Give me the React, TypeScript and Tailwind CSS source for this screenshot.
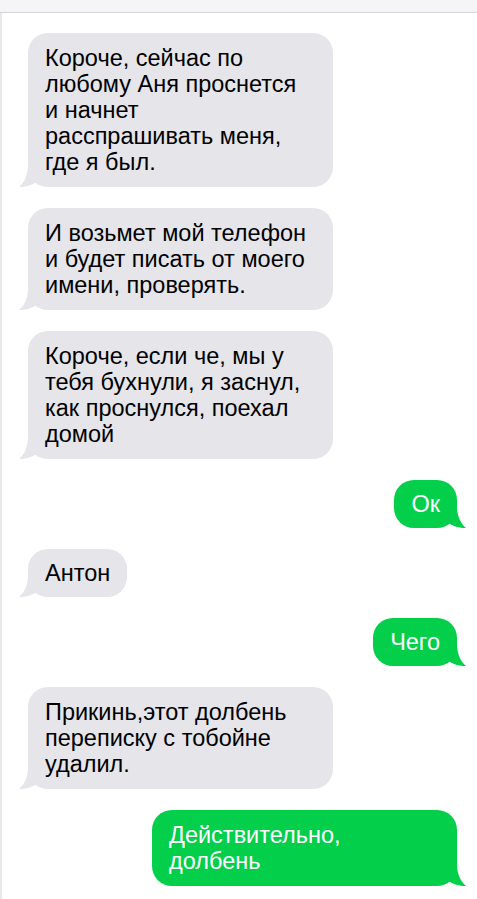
import React from 'react';

type Message = {
    from: 'them' | 'me';
    lines: string[];
    wide?: boolean;
};

const messages: Message[] = [
    {
        from: 'them',
        lines: ['Короче, сейчас по', 'любому Аня проснется', 'и начнет', 'расспрашивать меня,', 'где я был.'],
        wide: true,
    },
    {
        from: 'them',
        lines: ['И возьмет мой телефон', 'и будет писать от моего', 'имени, проверять.'],
        wide: true,
    },
    {
        from: 'them',
        lines: ['Короче, если че, мы у', 'тебя бухнули, я заснул,', 'как проснулся, поехал', 'домой'],
        wide: true,
    },
    { from: 'me', lines: ['Ок'] },
    { from: 'them', lines: ['Антон'] },
    { from: 'me', lines: ['Чего'] },
    {
        from: 'them',
        lines: ['Прикинь,этот долбень', 'переписку с тобойне', 'удалил.'],
        wide: true,
    },
    { from: 'me', lines: ['Действительно,', 'долбень'], wide: true },
];

const Tail = ({ mine }: { mine: boolean }) => (
    <svg
        width="22"
        height="22"
        viewBox="0 0 22 22"
        className={
            mine
                ? 'absolute -right-[9px] bottom-0 -scale-x-100 fill-[#03cf4b]'
                : 'absolute -left-[9px] bottom-0 fill-[#e5e5ea]'
        }
    >
        <path d="M9 0 C9 9 6 17 0 22 C7 22 13 20.5 18 16.5 L22 16.5 L22 0 Z" />
    </svg>
);

const Bubble = ({ msg }: { msg: Message }) => {
    const mine = msg.from === 'me';
    return (
        <div className={mine ? 'flex justify-end pr-[20px]' : 'flex justify-start pl-[26px]'}>
            <div
                className={`relative rounded-[20px] ${msg.wide ? 'w-[305px] px-[17px] py-3' : 'px-[17px] py-[11px]'} ${
                    mine ? 'bg-[#03cf4b] text-white' : 'bg-[#e5e5ea] text-black'
                }`}
            >
                <Tail mine={mine} />
                <p className="relative whitespace-nowrap text-[23.5px] leading-[26px]">
                    {msg.lines.map((line, i) => (
                        <span key={i}>
                            {line}
                            {i < msg.lines.length - 1 && <br />}
                        </span>
                    ))}
                </p>
            </div>
        </div>
    );
};

export default function App() {
    return (
        <div className="min-h-screen w-[477px] bg-white font-['Liberation_Sans',Arial,sans-serif]">
            <div className="h-[13px] bg-[#f5f5f7] border-b border-[#d4d4d8]"></div>
            <div className="border-l-2 border-[#e8e8ea] min-h-[886px] flex flex-col gap-[21px] pt-[20px] pb-4">
                {messages.map((msg, index) => (
                    <Bubble key={index} msg={msg} />
                ))}
            </div>
        </div>
    );
}
